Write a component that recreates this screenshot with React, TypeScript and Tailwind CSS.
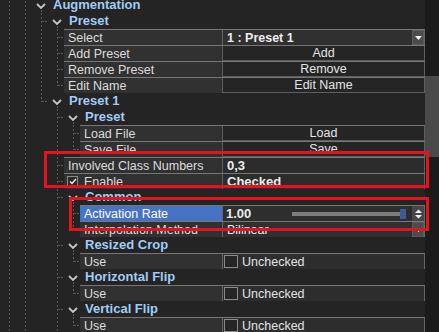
type Value =
  | { kind: "dropdown"; text: string; bold?: boolean }
  | { kind: "button"; text: string }
  | { kind: "text"; text: string }
  | { kind: "slider"; text: string }
  | { kind: "check"; text: string };

type Row =
  | { type: "group"; guides: string; label: string }
  | { type: "prop"; guides: string; label: string; value: Value; selected?: boolean; checkbox?: boolean };

const rows: Row[] = [
  { type: "group", guides: "II", label: "Augmentation" },
  { type: "group", guides: "IIT", label: "Preset" },
  { type: "prop", guides: "IIIT", label: "Select", value: { kind: "dropdown", text: "1 : Preset 1", bold: true } },
  { type: "prop", guides: "IIIT", label: "Add Preset", value: { kind: "button", text: "Add" } },
  { type: "prop", guides: "IIIT", label: "Remove Preset", value: { kind: "button", text: "Remove" } },
  { type: "prop", guides: "IIIL", label: "Edit Name", value: { kind: "button", text: "Edit Name" } },
  { type: "group", guides: "IIL", label: "Preset 1" },
  { type: "group", guides: "II T", label: "Preset" },
  { type: "prop", guides: "II IT", label: "Load File", value: { kind: "button", text: "Load" } },
  { type: "prop", guides: "II IL", label: "Save File", value: { kind: "button", text: "Save" } },
  { type: "prop", guides: "II T", label: "Involved Class Numbers", value: { kind: "text", text: "0,3" } },
  { type: "prop", guides: "II T", label: "Enable", checkbox: true, value: { kind: "text", text: "Checked" } },
  { type: "group", guides: "II T", label: "Common" },
  { type: "prop", guides: "II IT", label: "Activation Rate", selected: true, value: { kind: "slider", text: "1.00" } },
  { type: "prop", guides: "II IL", label: "Interpolation Method", value: { kind: "dropdown", text: "Bilinear" } },
  { type: "group", guides: "II T", label: "Resized Crop" },
  { type: "prop", guides: "II IL", label: "Use", value: { kind: "check", text: "Unchecked" } },
  { type: "group", guides: "II T", label: "Horizontal Flip" },
  { type: "prop", guides: "II IL", label: "Use", value: { kind: "check", text: "Unchecked" } },
  { type: "group", guides: "II T", label: "Vertical Flip" },
  { type: "prop", guides: "II IL", label: "Use", value: { kind: "check", text: "Unchecked" } },
];

const LINE = "#5c5c5c";

function Guide({ g }: { g: string }) {
  return (
    <svg width="16" height="16" viewBox="0 0 16 16" className="shrink-0">
      {(g === "I" || g === "T") && <line x1="9.5" y1="0" x2="9.5" y2="16" stroke={LINE} strokeDasharray="2 2" />}
      {g === "L" && <line x1="9.5" y1="0" x2="9.5" y2="9" stroke={LINE} strokeDasharray="2 2" />}
      {(g === "T" || g === "L") && <line x1="10" y1="8.5" x2="15" y2="8.5" stroke={LINE} strokeDasharray="2 1" />}
    </svg>
  );
}

function Chevron() {
  return (
    <svg width="16" height="16" viewBox="0 0 16 16" className="shrink-0">
      <polyline points="5,7 9,11 13,7" fill="none" stroke="#c4c4c4" strokeWidth="1.8" />
      <line x1="9.5" y1="13" x2="9.5" y2="16" stroke={LINE} strokeDasharray="2 2" />
    </svg>
  );
}

function DownTri() {
  return (
    <svg width="7" height="4" viewBox="0 0 7 4">
      <polygon points="0,0 7,0 3.5,4" fill="#f2f2f2" />
    </svg>
  );
}

function ValueCell({ v }: { v: Value }) {
  if (v.kind === "button") {
    return (
      <div className="flex w-[203px] shrink-0 items-center justify-center border-x border-b border-[#5e5e5e] bg-[#252525] text-[#e4e4e4]">
        {v.text}
      </div>
    );
  }
  if (v.kind === "dropdown") {
    return (
      <div className="flex w-[203px] shrink-0 items-center border-x border-[#666] bg-[#303030] text-[#ececec]">
        <span className={`flex-1 pl-1 ${v.bold ? "font-bold" : ""}`}>{v.text}</span>
        <span className="flex h-full w-3 items-center justify-center border border-[#5a5a5a] bg-[#4c4c4c]">
          <DownTri />
        </span>
      </div>
    );
  }
  if (v.kind === "text") {
    return (
      <div className="flex w-[203px] shrink-0 items-center border-x border-[#5e5e5e] bg-[#2c2c2c] pl-1 text-[13px] font-bold text-[#ececec]">
        {v.text}
      </div>
    );
  }
  if (v.kind === "slider") {
    return (
      <div className="flex w-[203px] shrink-0 items-center border-x border-[#666] bg-[#2e2e2e] text-[#ececec]">
        <span className="w-[69px] shrink-0 pl-[3px] text-[13px] font-bold">{v.text}</span>
        <span className="h-1 flex-1 bg-[#7d7d7d]" />
        <span className="h-[10px] w-[6px] shrink-0 bg-[#3d5a9a]" />
        <span className="w-[6px] shrink-0" />
        <span className="flex h-full w-3 shrink-0 items-center justify-center bg-[#474747]">
          <svg width="7" height="10" viewBox="0 0 7 10">
            <polygon points="0,4 7,4 3.5,0.5" fill="#f2f2f2" />
            <polygon points="0,6 7,6 3.5,9.5" fill="#f2f2f2" />
          </svg>
        </span>
      </div>
    );
  }
  return (
    <div className="flex w-[203px] shrink-0 items-center border-x border-[#666] bg-[#2d2d2d] text-[#e4e4e4]">
      <span className="ml-px h-[13px] w-[14px] shrink-0 border border-[#8a8a8a] bg-[#262626]" />
      <span className="ml-1">{v.text}</span>
    </div>
  );
}

function TreeRow({ row }: { row: Row }) {
  const guides = row.guides.split("").map((g, i) => <Guide key={i} g={g} />);
  if (row.type === "group") {
    return (
      <div className="flex h-4 items-center">
        {guides}
        <Chevron />
        <span className="ml-[5px] text-[13px] font-bold text-[#a0cdf5]">{row.label}</span>
      </div>
    );
  }
  return (
    <div className="flex h-4">
      {guides}
      <div className="flex min-w-0 flex-1 border-t border-[#777]">
        <div
          className={`flex min-w-0 flex-1 items-center whitespace-nowrap ${
            row.selected ? "bg-[#4673c6] text-white" : "bg-[#313131] text-[#dcdcdc]"
          } ${row.checkbox ? "pl-[3px]" : "pl-1"}`}
        >
          {row.checkbox && (
            <span className="mr-[6px] flex h-[11px] w-[11px] shrink-0 items-center justify-center border border-[#8c8c8c] bg-[#2a2a2a]">
              <svg width="8" height="7" viewBox="0 0 8 7">
                <polyline points="1,3.5 3,5.5 7,1" fill="none" stroke="#f0f0f0" strokeWidth="1.4" />
              </svg>
            </span>
          )}
          {row.label}
        </div>
        <ValueCell v={row.value} />
      </div>
    </div>
  );
}

export default function App() {
  return (
    <div className="relative flex h-[332px] w-[439px] overflow-hidden bg-[#242424] font-['Liberation_Sans','Noto_Sans_CJK_KR',sans-serif] text-[12.5px] leading-4">
      <div className="mt-[-3px] flex min-w-0 flex-1 flex-col">
        {rows.map((r, i) => (
          <TreeRow key={i} row={r} />
        ))}
      </div>
      <div className="w-[14px] shrink-0 bg-[#1b1b1b]">
        <div className="mt-[76px] h-[81px] bg-[#4a4a4a]" />
      </div>
      <div className="pointer-events-none absolute left-[44px] top-[151px] h-[37px] w-[385px] border-[3px] border-[#e3141c]" />
      <div className="pointer-events-none absolute left-[69px] top-[197px] h-[34px] w-[360px] border-[3px] border-[#e3141c]" />
    </div>
  );
}
